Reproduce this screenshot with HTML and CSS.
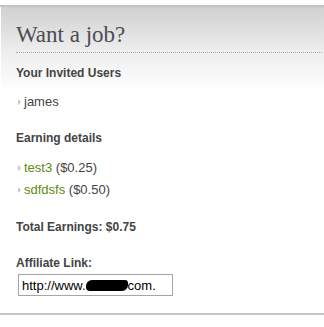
FILE: index.html
```html
<!DOCTYPE html>
<html lang="en">
<head>
  <meta charset="UTF-8">
  <title>Want a job?</title>
  <link rel="stylesheet" href="styles.css">
</head>
<body>

  <!-- Affiliate panel -->
  <div class="panel">
    <h2>Want a job?</h2>

    <h3 class="first">Your Invited Users</h3>
    <ul class="users">
      <li>james</li>
    </ul>

    <h3>Earning details</h3>
    <ul class="earnings">
      <li><a href="#">test3</a> ($0.25)</li>
      <li><a href="#">sdfdsfs</a> ($0.50)</li>
    </ul>

    <h3 class="total">Total Earnings: $0.75</h3>

    <h3 class="link-label">Affiliate Link:</h3>
    <div class="link-box">http://www.<span class="blot"></span>com.</div>
  </div>

</body>
</html>
```

FILE: styles.css
```css
* {
  margin: 0;
  padding: 0;
  box-sizing: border-box;
}
body {
  font-family: "Liberation Sans", Arial, sans-serif;
  font-size: 12px;
  color: #444;
  background-color: white;
}
.panel {
  margin-top: 5px;
  border-top: 2px solid #c4c4c4;
  border-bottom: 2px solid #c4c4c4;
  padding: 0 2px 17px 16px;
  background: linear-gradient(to bottom, #d0d0d0 0px, #eeeeee 45px, #ffffff 85px);
  background-repeat: no-repeat;
  background-position: 1px 0;
}
.panel h2 {
  font-family: "Liberation Serif", "Times New Roman", serif;
  font-weight: normal;
  font-size: 23px;
  line-height: 28px;
  color: #4c4c56;
  padding-top: 14px;
  padding-bottom: 3px;
  border-bottom: 1px dotted #aaa;
}
.panel h3 {
  font-size: 12px;
  line-height: 16px;
  font-weight: bold;
  color: #444;
  margin-top: 20px;
}
.panel h3.first {
  margin-top: 12px;
}
.panel h3.total {
  margin-top: 21px;
}
ul {
  list-style-type: none;
}
.users {
  margin-top: 13px;
}
.earnings {
  margin-top: 14px;
}
ul li {
  font-size: 13px;
  line-height: 16px;
  padding-left: 8px;
  position: relative;
  color: #444;
}
.earnings li + li {
  margin-top: 6px;
}
ul li::before {
  content: "";
  position: absolute;
  left: 2px;
  top: 5px;
  border-left: 3px solid #c8c8c8;
  border-top: 3px solid transparent;
  border-bottom: 3px solid transparent;
}
ul li a {
  color: #5f8a12;
  text-decoration: none;
}
.link-box {
  margin-top: 3px;
  margin-left: 2px;
  width: 155px;
  height: 22px;
  border: 1px solid #a5a5a5;
  padding: 3px 3px 0 3px;
  font-size: 13px;
  line-height: 15px;
  color: #000;
  white-space: nowrap;
  overflow: hidden;
  background: white;
}
.blot {
  display: inline-block;
  width: 42px;
  height: 11px;
  background: #000;
  border-radius: 6px 3px 6px 4px;
  vertical-align: -1px;
}
```
